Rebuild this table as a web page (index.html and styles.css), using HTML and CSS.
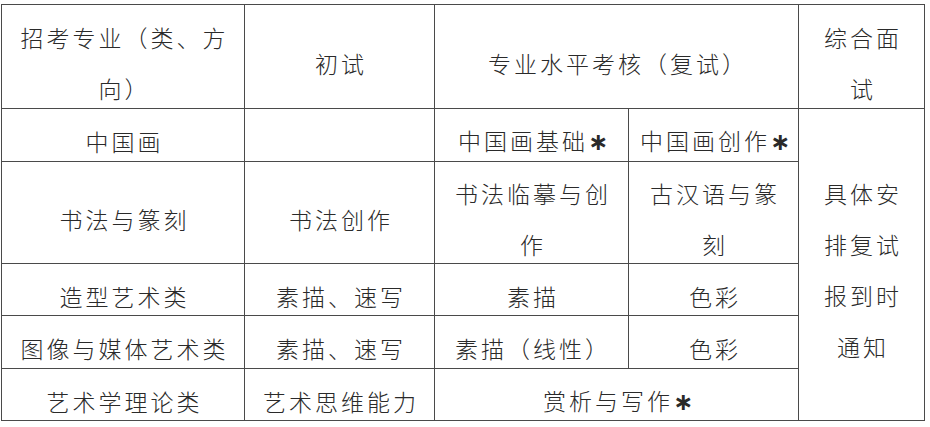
FILE: index.html
```html
<!DOCTYPE html>
<html lang="zh-CN">
<head>
<meta charset="utf-8">
<title>招考专业</title>
<link rel="stylesheet" href="styles.css">
</head>
<body>
<table class="exam">
  <colgroup>
    <col class="c1"><col class="c2"><col class="c3"><col class="c4"><col class="c5">
  </colgroup>
  <tr class="r-head">
    <td><div class="ml">招考专业（类、方<br>向）</div></td>
    <td>初试</td>
    <td colspan="2">专业水平考核（复试）</td>
    <td><div class="ml">综合面<br>试</div></td>
  </tr>
  <tr class="r-s1">
    <td>中国画</td>
    <td></td>
    <td>中国画基础<span class="ast">∗</span></td>
    <td>中国画创作<span class="ast">∗</span></td>
    <td rowspan="5" class="notice">具体安<br>排复试<br>报到时<br>通知</td>
  </tr>
  <tr class="r-tall">
    <td>书法与篆刻</td>
    <td>书法创作</td>
    <td><div class="ml">书法临摹与创<br>作</div></td>
    <td><div class="ml">古汉语与篆<br>刻</div></td>
  </tr>
  <tr class="r-s2">
    <td>造型艺术类</td>
    <td>素描、速写</td>
    <td>素描</td>
    <td>色彩</td>
  </tr>
  <tr class="r-s3">
    <td>图像与媒体艺术类</td>
    <td>素描、速写</td>
    <td>素描（线性）</td>
    <td>色彩</td>
  </tr>
  <tr class="r-s4">
    <td>艺术学理论类</td>
    <td>艺术思维能力</td>
    <td colspan="2">赏析与写作<span class="ast">∗</span></td>
  </tr>
</table>
</body>
</html>
```
FILE: styles.css
```css
html, body {
  margin: 0;
  padding: 0;
  background: #fff;
}
body {
  padding: 4px 0 0 1px;
}
.exam {
  border-collapse: collapse;
  table-layout: fixed;
  width: 923px;
  font-family: "Noto Sans CJK SC", "Noto Sans", sans-serif;
  font-weight: 300;
  font-size: 23px;
  letter-spacing: 3px;
  color: #2a2a2a;
}
.c1 { width: 243px; }
.c2 { width: 190px; }
.c3 { width: 194px; }
.c4 { width: 170px; }
.c5 { width: 126px; }
.exam td {
  border: 1px solid #4a4a4a;
  text-align: center;
  vertical-align: middle;
  padding: 12px 0 0 3px;
  line-height: 36px;
  white-space: nowrap;
}
.r-head { height: 104px; }
.r-s1 { height: 53px; }
.r-tall { height: 102px; }
.r-s2 { height: 52px; }
.r-s3 { height: 53px; }
.r-s4 { height: 52px; }
.exam td .ml {
  line-height: 51px;
  margin: -8px 0 -8px;
}
.exam td.notice {
  padding-top: 10px;
  line-height: 51px;
}
.ast {
  font-family: "DejaVu Sans", sans-serif;
  font-weight: bold;
  font-size: 24px;
  letter-spacing: 0;
}
```
